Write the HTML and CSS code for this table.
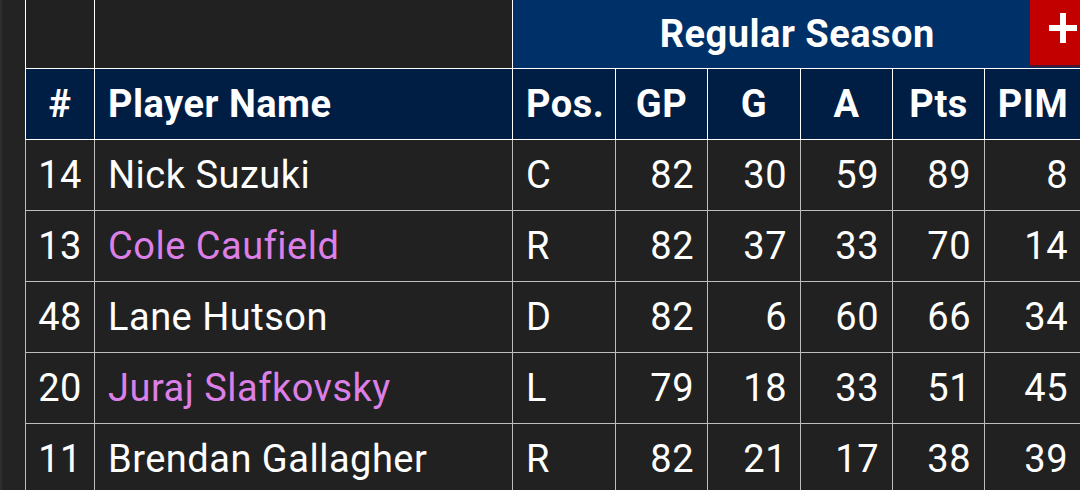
FILE: index.html
```html
<!DOCTYPE html>
<html>
<head>
<meta charset="utf-8">
<link rel="stylesheet" href="styles.css">
</head>
<body>
<div class="page">
  <div class="strip"></div>
  <div class="wrap">
    <table class="stats">
      <colgroup>
        <col class="c-num"><col class="c-name"><col class="c-pos"><col class="c-gp"><col class="c-g"><col class="c-a"><col class="c-pts"><col class="c-pim">
      </colgroup>
      <thead>
        <tr class="h1">
          <th class="blank"></th>
          <th class="blank"></th>
          <th class="season" colspan="6">Regular Season</th>
        </tr>
        <tr class="h2">
          <th class="ctr">#</th>
          <th class="left">Player Name</th>
          <th class="left">Pos.</th>
          <th class="ctr">GP</th>
          <th class="ctr">G</th>
          <th class="ctr">A</th>
          <th class="ctr">Pts</th>
          <th class="ctr">PIM</th>
        </tr>
      </thead>
      <tbody>
        <tr><td class="ctr">14</td><td class="left">Nick Suzuki</td><td class="left">C</td><td>82</td><td>30</td><td>59</td><td>89</td><td>8</td></tr>
        <tr><td class="ctr">13</td><td class="left rookie">Cole Caufield</td><td class="left">R</td><td>82</td><td>37</td><td>33</td><td>70</td><td>14</td></tr>
        <tr><td class="ctr">48</td><td class="left">Lane Hutson</td><td class="left">D</td><td>82</td><td>6</td><td>60</td><td>66</td><td>34</td></tr>
        <tr><td class="ctr">20</td><td class="left rookie">Juraj Slafkovsky</td><td class="left">L</td><td>79</td><td>18</td><td>33</td><td>51</td><td>45</td></tr>
        <tr><td class="ctr">11</td><td class="left">Brendan Gallagher</td><td class="left">R</td><td>82</td><td>21</td><td>17</td><td>38</td><td>39</td></tr>
      </tbody>
    </table>
    <div class="add" title="Add">
      <svg class="plus" width="28" height="30" viewBox="0 0 28 30"><rect x="0" y="12" width="28" height="6" fill="#ffffff"/><rect x="11" y="0" width="6" height="30" fill="#ffffff"/></svg>
    </div>
  </div>
</div>
</body>
</html>
```

FILE: styles.css
```css
html, body {
  margin: 0;
  padding: 0;
  background: #212121;
  overflow: hidden;
}
.page {
  display: flex;
  width: 1080px;
  height: 490px;
  overflow: hidden;
  font-family: Roboto, "Liberation Sans", sans-serif;
  color: #ffffff;
}
.strip {
  flex: 0 0 25px;
  background: #232323;
  border-left: 2px solid #2e2e2e;
  box-sizing: border-box;
}
.wrap {
  position: relative;
  flex: 0 0 auto;
}
.stats {
  border-collapse: collapse;
  table-layout: fixed;
  width: 1056px;
  margin-top: -1px;
}
.c-num { width: 69px; }
.c-name { width: 418px; }
.c-pos { width: 103px; }
.c-gp { width: 92px; }
.c-g { width: 93px; }
.c-a { width: 92px; }
.c-pts { width: 92px; }
.c-pim { width: 97px; }
th {
  font-weight: 700;
  font-size: 38px;
  letter-spacing: 0.5px;
  border: 1px solid #ffffff;
  padding: 0 13px;
  white-space: nowrap;
}
.h1 th { height: 68px; }
.h2 th {
  height: 70px;
  background: #001e44;
}
.h1 .blank { background: #212121; }
.season {
  background: #003068;
  text-align: center;
  border-right: none;
}
td {
  font-size: 38px;
  letter-spacing: 0.5px;
  height: 70px;
  border: 1px solid #bdbdbd;
  padding: 0 13px;
  text-align: right;
  white-space: nowrap;
  background: #212121;
}
tbody tr:first-child td { border-top-color: #ffffff; }
.left { text-align: left; }
.ctr { text-align: center; }
td.ctr { padding: 0 4px; }
th.ctr { padding: 0 4px; }
.rookie { color: #dc80e8; }
.add {
  position: absolute;
  top: 0;
  left: 1005px;
  width: 62px;
  height: 65px;
  background: #c30000;
  box-shadow: 0 2px 0 #4a1830;
  display: flex;
  align-items: flex-start;
  padding: 13px 0 0 19px;
  box-sizing: border-box;
}
.plus { display: block; }
```
